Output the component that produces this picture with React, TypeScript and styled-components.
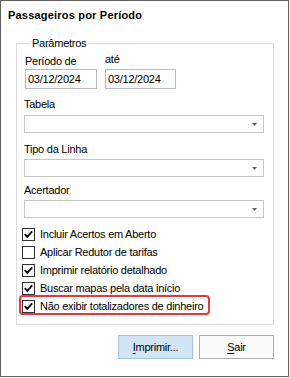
import styled, { createGlobalStyle } from 'styled-components';

const GlobalStyle = createGlobalStyle`
  body {
    margin: 0;
    background: #fff;
    font-family: 'Liberation Sans', Arial, sans-serif;
    font-size: 11px;
    color: #000;
  }
`;

const Window = styled.div`
  box-sizing: border-box;
  width: 289px;
  height: 377px;
  border: 1px solid #5f5f5f;
  background: #fff;
  padding: 8px 14px 0 7px;
  display: flex;
  flex-direction: column;
  letter-spacing: -0.25px;
`;

const Title = styled.div`
  font-weight: bold;
  font-size: 11px;
  line-height: 13px;
  height: 13px;
  letter-spacing: 0.2px;
`;

const Group = styled.fieldset`
  margin: 15px 0 0 8px;
  padding: 0 0 9px 7px;
  border: 1px solid #dcdcdc;
  min-width: 0;
  display: flex;
  flex-direction: column;
  align-items: flex-start;
`;

const Legend = styled.legend`
  margin-left: 6px;
  padding: 0 2px;
  line-height: 13px;
`;

const DateRow = styled.div`
  display: flex;
  gap: 8px;
  margin: 5px 0 0 1px;
`;

const DateField = styled.div`
  display: flex;
  flex-direction: column;
`;

const DateLabel = styled.span<{ $raise?: number }>`
  line-height: 13px;
  margin-top: ${(p) => -(p.$raise ?? 0)}px;
  margin-bottom: ${(p) => 1 + (p.$raise ?? 0)}px;
`;

const DateInput = styled.div<{ $width: number }>`
  box-sizing: border-box;
  width: ${(p) => p.$width}px;
  height: 20px;
  border: 1px solid #bcbcbc;
  padding-left: 2px;
  display: flex;
  align-items: center;
`;

const FieldLabel = styled.span<{ $top: number; $gap: number }>`
  line-height: 13px;
  margin-top: ${(p) => p.$top}px;
  margin-bottom: ${(p) => p.$gap}px;
`;

const Combo = styled.div`
  box-sizing: border-box;
  width: 240px;
  height: 18px;
  border: 1px solid #c6c6c6;
  display: flex;
  align-items: center;
  justify-content: flex-end;
  padding-right: 6px;
`;

const CheckList = styled.div`
  display: flex;
  flex-direction: column;
  margin: 7px 0 0 -2px;
`;

const CheckRow = styled.label<{ $highlight?: boolean }>`
  position: relative;
  display: flex;
  align-items: center;
  gap: 5px;
  height: 18px;
  line-height: 18px;
  white-space: nowrap;

  &::after {
    content: '';
    display: ${(p) => (p.$highlight ? 'block' : 'none')};
    position: absolute;
    left: -3px;
    top: -2px;
    width: 191px;
    height: 20px;
    box-sizing: border-box;
    border: 2px solid #e23a40;
    border-radius: 4px;
  }
`;

const Box = styled.span`
  box-sizing: border-box;
  width: 13px;
  height: 13px;
  border: 1px solid #333;
  background: #fff;
  display: flex;
  align-items: center;
  justify-content: center;
  flex-shrink: 0;
`;

const ButtonRow = styled.div`
  display: flex;
  justify-content: flex-end;
  gap: 6px;
  margin-top: 10px;
`;

const Button = styled.div<{ $primary?: boolean }>`
  box-sizing: border-box;
  width: 75px;
  height: 24px;
  display: flex;
  align-items: center;
  justify-content: center;
  background: ${(p) => (p.$primary ? '#d2e5f5' : '#fbfbfb')};
  border: 1px solid ${(p) => (p.$primary ? '#9fc3e3' : '#adadad')};
  u {
    text-decoration: underline;
    text-underline-offset: 2px;
  }
`;

function Arrow() {
  return (
    <svg width="5" height="3" viewBox="0 0 5 3">
      <polygon points="0,0 5,0 2.5,3" fill="#606060" />
    </svg>
  );
}

function Checkbox({ label, checked, highlight }: { label: string; checked: boolean; highlight?: boolean }) {
  return (
    <CheckRow $highlight={highlight}>
      <Box>
        {checked && (
          <svg width="11" height="11" viewBox="0 0 11 11">
            <polyline points="1.8,5.2 4.2,7.8 9.2,2.3" fill="none" stroke="#000" strokeWidth="1.8" />
          </svg>
        )}
      </Box>
      {label}
    </CheckRow>
  );
}

const CHECKS = [
  { label: 'Incluir Acertos em Aberto', checked: true },
  { label: 'Aplicar Redutor de tarifas', checked: false },
  { label: 'Imprimir relatório detalhado', checked: true },
  { label: 'Buscar mapas pela data início', checked: true },
  { label: 'Não exibir totalizadores de dinheiro', checked: true, highlight: true },
];

export default function App() {
  return (
    <>
      <GlobalStyle />
      <Window>
        <Title>Passageiros por Período</Title>
        <Group>
          <Legend>Parâmetros</Legend>
          <DateRow>
            <DateField>
              <DateLabel>Período de</DateLabel>
              <DateInput $width={72}>03/12/2024</DateInput>
            </DateField>
            <DateField>
              <DateLabel $raise={2}>até</DateLabel>
              <DateInput $width={71}>03/12/2024</DateInput>
            </DateField>
          </DateRow>
          <FieldLabel $top={9} $gap={4}>Tabela</FieldLabel>
          <Combo>
            <Arrow />
          </Combo>
          <FieldLabel $top={10} $gap={3}>Tipo da Linha</FieldLabel>
          <Combo>
            <Arrow />
          </Combo>
          <FieldLabel $top={7} $gap={3}>Acertador</FieldLabel>
          <Combo>
            <Arrow />
          </Combo>
          <CheckList>
            {CHECKS.map((c) => (
              <Checkbox key={c.label} label={c.label} checked={c.checked} highlight={c.highlight} />
            ))}
          </CheckList>
        </Group>
        <ButtonRow>
          <Button $primary>
            <span>
              <u>I</u>mprimir...
            </span>
          </Button>
          <Button>
            <span>
              <u>S</u>air
            </span>
          </Button>
        </ButtonRow>
      </Window>
    </>
  );
}
